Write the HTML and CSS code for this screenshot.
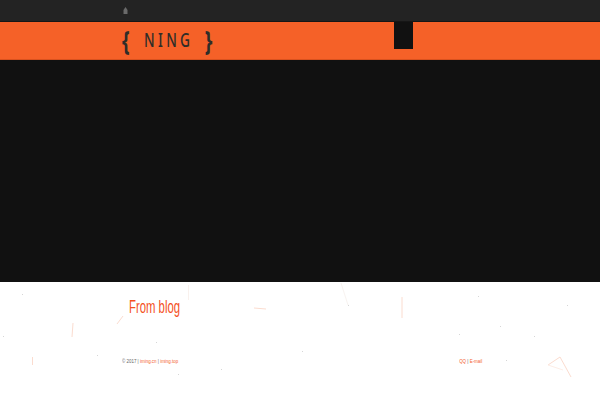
FILE: index.html
```html
<!DOCTYPE html>
<html lang="zh-CN">
<head>
    <meta charset="UTF-8">
    <title>NING</title>
    <link rel="stylesheet" href="styles.css">
</head>
<body>
    <div class="topbar">
        <svg class="home-icon" width="5" height="7" viewBox="0 0 5 7">
            <path d="M2.5 0 L4.5 3 V7 H0.5 V3 Z" fill="#6a6a6a"/>
        </svg>
    </div>
    <header class="brand">
        <div class="logo">
            <span class="brace">{</span>
            <span class="logo-name">NING</span>
            <span class="brace">}</span>
        </div>
        <div class="nav-block"></div>
    </header>
    <main class="content"></main>
    <section class="lower">
        <svg class="particles" width="600" height="118" viewBox="0 0 600 118">
            <g stroke="#fbdccf" stroke-width="1" fill="none">
                <path d="M123 34 L117 42"/>
                <path d="M73 41 L72 55"/>
                <path d="M254 26 L266 27"/>
                <path d="M402 15 V36"/>
                <path d="M32.5 75 V83"/>
                <path d="M188.5 3 V18" stroke="#f9f1ed"/>
                <path d="M341 1 L348 23" stroke="#f8f3f0"/>
                <path d="M548 83 L560 75 L571 95"/>
                <path d="M548 83 L563 88" stroke="#fdeee7"/>
            </g>
            <g fill="#d6d6d6">
                <rect x="22" y="12" width="1" height="1"/>
                <rect x="3" y="54" width="1" height="1"/>
                <rect x="156" y="60" width="1" height="1"/>
                <rect x="97" y="73" width="1" height="1"/>
                <rect x="221" y="87" width="1" height="1"/>
                <rect x="178" y="92" width="1" height="1"/>
                <rect x="348" y="23" width="1" height="1"/>
                <rect x="302" y="69" width="1" height="1"/>
                <rect x="478" y="14" width="1" height="1"/>
                <rect x="567" y="23" width="1" height="1"/>
                <rect x="500" y="44" width="1" height="1"/>
                <rect x="459" y="52" width="1" height="1"/>
                <rect x="534" y="54" width="1" height="1"/>
                <rect x="506" y="78" width="1" height="1"/>
            </g>
        </svg>
        <h2 class="blog-title">From blog</h2>
        <footer class="foot">
            <p class="foot-text">© 2017 | <a href="#">iming.cn</a> | <a href="#">iming.top</a></p>
            <p class="foot-text foot-links"><a href="#">QQ</a> | <a href="#">E-mail</a></p>
        </footer>
    </section>
</body>
</html>
```

FILE: styles.css
```css
* {
    box-sizing: border-box;
}
html, body {
    height: 100%;
}
body {
    margin: 0;
    display: flex;
    flex-direction: column;
    height: 400px;
    overflow: hidden;
    background-color: #fff;
    font-family: 'Liberation Sans', Arial, sans-serif;
}
a {
    color: #f4602a;
    text-decoration: none;
}
.topbar {
    height: 22px;
    padding: 7px 0 0 123px;
    background-color: #232323;
    border-bottom: 1px solid #161616;
}
.home-icon {
    display: block;
}
.brand {
    display: flex;
    height: 38px;
    padding-left: 122px;
    background-color: #f56128;
    border-bottom: 1px solid #d9521f;
}
.logo {
    display: flex;
    align-items: center;
    gap: 20px;
    width: 272px;
    height: 100%;
    padding-bottom: 3px;
    color: #2f2d28;
    font-family: 'Noto Sans', sans-serif;
    transform: scaleX(.72);
    transform-origin: left;
}
.brace {
    font-size: 27px;
    font-weight: 700;
    line-height: 1;
}
.logo-name {
    margin-right: -4px;
    padding-top: 3px;
    font-size: 19px;
    font-weight: 500;
    letter-spacing: 4.6px;
    line-height: 1;
}
.nav-block {
    width: 19px;
    height: 27px;
    background-color: #111;
}
.content {
    height: 222px;
    background-color: #111;
}
.lower {
    position: relative;
    flex: 1;
    padding: 14px 0 0 129px;
    background-color: #fff;
}
.particles {
    position: absolute;
    top: 0;
    left: 0;
}
.blog-title {
    position: relative;
    margin: 0;
    color: #f4511e;
    font-size: 18px;
    font-weight: 400;
    line-height: 22px;
    transform: scaleX(.63);
    transform-origin: left;
}
.foot {
    position: relative;
    display: flex;
    justify-content: space-between;
    margin: 39px 118px 0 -7px;
}
.foot-text {
    margin: 0;
    color: #666;
    font-size: 6px;
    line-height: 8px;
    white-space: nowrap;
    transform: scaleX(.74);
    transform-origin: left;
}
.foot-links {
    transform-origin: right;
}
.foot-links a {
    color: #f4602a;
}
```
